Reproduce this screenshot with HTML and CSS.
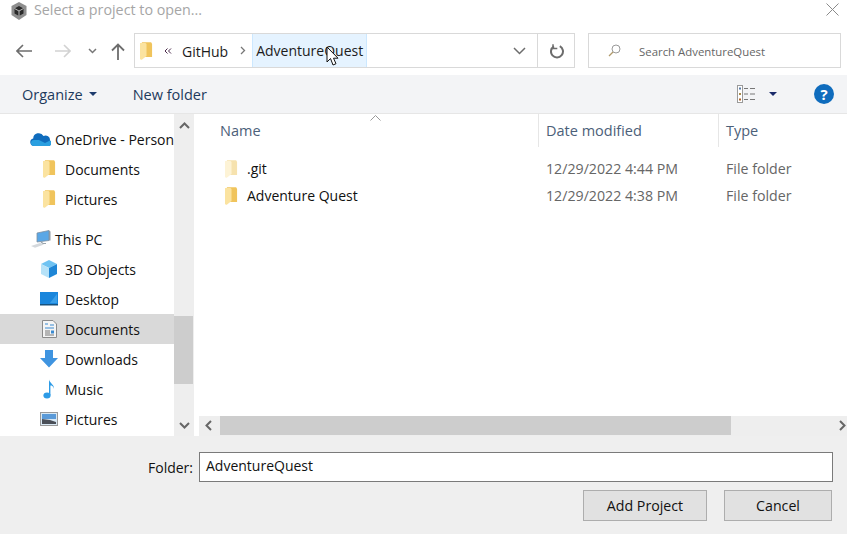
FILE: index.html
```html
<!DOCTYPE html>
<html lang="en">
<head>
	<meta charset="UTF-8">
	<title>Select a project to open...</title>
	<link rel="stylesheet" href="styles.css">
</head>
<body>
	<svg class="defs" width="0" height="0">
		<symbol id="folder" viewBox="0 0 14 19">
			<path d="M2 0h10l1 2v14H2z" fill="#f0c45c"/>
			<path d="M0 1h6l1 1v13L2 19H1L0 18z" fill="#fbe3a0"/>
		</symbol>
		<symbol id="folder-pale" viewBox="0 0 14 19">
			<path d="M2 0h10l1 2v14H2z" fill="#f6e2ae"/>
			<path d="M0 1h6l1 1v13L2 19H1L0 18z" fill="#fdf3d6"/>
		</symbol>
	</svg>

	<div class="titlebar">
		<svg class="app-icon" width="16" height="18" viewBox="0 0 16 18">
			<path d="M8 0l7.500 4v9L8 18 .5 13V4z" fill="#8e8e8e"/>
			<path d="M8 4l4.500 2.500v5L8 14l-4.500-2.500v-5z" fill="#2a2a2a"/>
			<path d="M8 9v5M8 9L3.500 6.500M8 9l4.500-2.500" stroke="#bbb" fill="none"/>
		</svg>
		<span class="title">Select a project to open...</span>
		<svg class="close" width="13" height="13" viewBox="0 0 13 13">
			<path d="M.5.5l12 12M12.500.5l-12 12" stroke="#8a8a8a" fill="none"/>
		</svg>
	</div>

	<div class="navbar">
		<svg class="nav-back" width="16" height="14" viewBox="0 0 16 14">
			<path d="M1 7h15M7 1L1 7l6 6" stroke="#6d6d6d" stroke-width="1.600" fill="none"/>
		</svg>
		<svg class="nav-forward" width="16" height="14" viewBox="0 0 16 14">
			<path d="M0 7h15M9 1l6 6-6 6" stroke="#d2d2d2" stroke-width="1.600" fill="none"/>
		</svg>
		<svg class="nav-down" width="9" height="6" viewBox="0 0 9 6">
			<path d="M1 1l3.500 3.500L8 1" stroke="#777" stroke-width="1.500" fill="none"/>
		</svg>
		<svg class="nav-up" width="14" height="17" viewBox="0 0 14 17">
			<path d="M7 17V1.500M1 7.500l6-6 6 6" stroke="#6d6d6d" stroke-width="1.800" fill="none"/>
		</svg>
		<div class="address">
			<svg class="address-folder" width="13" height="18"><use href="#folder"/></svg>
			<svg class="chevrons" width="8" height="6" viewBox="0 0 8 6">
				<path d="M3.500.5L1 3l2.500 2.500M7 .5L4.500 3 7 5.500" stroke="#4a2a4a" fill="none"/>
			</svg>
			<span class="crumb crumb-first">GitHub</span>
			<svg class="crumb-sep" width="6" height="9" viewBox="0 0 6 9">
				<path d="M1 1l3.500 3.500L1 8" stroke="#777" stroke-width="1.300" fill="none"/>
			</svg>
			<span class="crumb crumb-current">AdventureQuest</span>
			<svg class="address-arrow" width="13" height="8" viewBox="0 0 13 8">
				<path d="M1 1l5.500 5.500L12 1" stroke="#6d6d6d" stroke-width="1.500" fill="none"/>
			</svg>
			<div class="refresh">
				<svg width="15" height="15" viewBox="0 0 15 15">
					<path d="M9.800 2.200A6 6 0 1 1 4 2.300" stroke="#6d6d6d" stroke-width="2" fill="none"/>
					<path d="M3 .2v4.300h4.300" stroke="#6d6d6d" stroke-width="1.500" fill="none"/>
				</svg>
			</div>
		</div>
		<div class="search">
			<svg width="13" height="13" viewBox="0 0 13 13">
				<circle cx="8" cy="5" r="4" stroke="#9a9a9a" fill="none"/>
				<path d="M5 8l-4 4" stroke="#b09a6a" stroke-width="1.200"/>
			</svg>
			<span>Search AdventureQuest</span>
		</div>
	</div>

	<div class="toolbar">
		<span class="tool organize">Organize</span>
		<span class="caret"></span>
		<span class="tool new-folder">New folder</span>
		<svg class="view-icon" width="18" height="18" viewBox="0 0 18 18">
			<rect x=".5" y=".5" width="5" height="17" fill="#fff" stroke="#9a9a9a"/>
			<rect x="2" y="2.500" width="2" height="2" fill="#5a7ca8"/>
			<rect x="2" y="8" width="2" height="2" fill="#a88a4a"/>
			<rect x="2" y="13.500" width="2" height="2" fill="#b0642a"/>
			<path d="M7 3.500h4M13 3.500h5M7 9h4M13 9h5M7 14.500h4M13 14.500h5" stroke="#777"/>
		</svg>
		<span class="caret caret-dark"></span>
		<div class="help">?</div>
	</div>

	<div class="main">
		<div class="tree">
			<ul class="tree-list">
				<li class="tree-top">
					<svg width="21" height="14" viewBox="0 0 21 14">
						<path d="M4 14a3.800 3.800 0 0 1-.8-7.500A5.500 5.500 0 0 1 13.500 4 4.500 4.500 0 0 1 20 8.500 3 3 0 0 1 18 14z" fill="#0f6cbd"/>
						<path d="M4 14a3 3 0 0 1 0-6h5l6 3 5-2.500A3 3 0 0 1 18 14z" fill="#2a9fe0"/>
					</svg>
					<span>OneDrive - Personal</span>
				</li>
				<li><svg class="ico-folder" width="13" height="18"><use href="#folder"/></svg><span>Documents</span></li>
				<li class="tree-last"><svg class="ico-folder" width="13" height="18"><use href="#folder"/></svg><span>Pictures</span></li>
				<li class="tree-top">
					<svg width="21" height="18" viewBox="0 0 21 18">
						<path d="M7 3l12-2.500v10L7 12z" fill="#5aa7e6" stroke="#7f8f9f" stroke-width=".8"/>
						<path d="M19 .5l1.500 1v9l-1.500 0z" fill="#8d99a5"/>
						<path d="M1 16l9-3 4 1.500-9 3.300z" fill="#d4d8dc"/>
						<path d="M11 12l2 1.500h3" stroke="#9aa5ad" stroke-width="1.200" fill="none"/>
					</svg>
					<span>This PC</span>
				</li>
				<li>
					<svg width="18" height="18" viewBox="0 0 18 18">
						<path d="M9 0l8 4-8 4-8-4z" fill="#6fc3f2"/>
						<path d="M1 4l8 4v10l-8-4z" fill="#b6e2f8"/>
						<path d="M17 4L9 8v10l8-4z" fill="#1e86d6"/>
					</svg>
					<span>3D Objects</span>
				</li>
				<li>
					<svg width="18" height="14" viewBox="0 0 18 14">
						<rect width="18" height="12" fill="#1a86dc"/>
						<path d="M10 11l7-9v9z" fill="#3aa0ea"/>
						<rect y="12" width="18" height="1.500" fill="#17527e"/>
					</svg>
					<span>Desktop</span>
				</li>
				<li class="selected">
					<svg width="18" height="18" viewBox="0 0 18 18">
						<path d="M2.500.5H13L16.500 4v13.500h-14z" fill="#f4f4f4" stroke="#8a8a8a"/>
						<path d="M5 4h3M10 5h4M5 8h9" stroke="#3a8ad0"/>
						<path d="M5 11h5M5 13h5M5 15h9" stroke="#777"/>
						<rect x="11" y="10.500" width="3" height="3" fill="#3a8ad0"/>
					</svg>
					<span>Documents</span>
				</li>
				<li>
					<svg width="18" height="18" viewBox="0 0 18 18">
						<path d="M5 0h8v8h5l-9 9.500L0 8h5z" fill="#3f94e0"/>
					</svg>
					<span>Downloads</span>
				</li>
				<li>
					<svg width="18" height="20" viewBox="0 0 18 20">
						<ellipse cx="7" cy="16.500" rx="3.600" ry="3" fill="#2d9be6"/>
						<path d="M9 16V.5c.5 3.500 5.500 5 5 9.500-.5-3-2.500-3.500-3.600-3.500V16z" fill="#2d9be6"/>
					</svg>
					<span>Music</span>
				</li>
				<li>
					<svg width="18" height="14" viewBox="0 0 18 14">
						<rect x=".5" y=".5" width="17" height="13" fill="#d8e8f4" stroke="#999"/>
						<rect x="2" y="2" width="14" height="5" fill="#5a9ad8"/>
						<path d="M2 7l8 1 6 2v2H2z" fill="#4a4f58"/>
					</svg>
					<span>Pictures</span>
				</li>
			</ul>
			<div class="vscroll">
				<svg class="arrow" width="11" height="7" viewBox="0 0 11 7"><path d="M1 6l4.500-4.500L10 6" stroke="#666" stroke-width="2" fill="none"/></svg>
				<div class="vtrack"><div class="vthumb"></div></div>
				<svg class="arrow" width="11" height="7" viewBox="0 0 11 7"><path d="M1 1l4.500 4.500L10 1" stroke="#666" stroke-width="2" fill="none"/></svg>
			</div>
		</div>
		<div class="files">
			<div class="file-head">
				<span class="col col-name">Name</span>
				<span class="col col-date">Date modified</span>
				<span class="col col-type">Type</span>
				<svg class="sort-caret" width="11" height="6" viewBox="0 0 11 6"><path d="M.5 5.500l5-5 5 5" stroke="#999" fill="none"/></svg>
			</div>
			<div class="file-row">
				<span class="col-name file-name"><svg width="13" height="18"><use href="#folder-pale"/></svg>.git</span>
				<span class="col-date file-meta">12/29/2022 4:44 PM</span>
				<span class="col-type file-meta">File folder</span>
			</div>
			<div class="file-row">
				<span class="col-name file-name"><svg width="13" height="18"><use href="#folder"/></svg>Adventure Quest</span>
				<span class="col-date file-meta">12/29/2022 4:38 PM</span>
				<span class="col-type file-meta">File folder</span>
			</div>
			<div class="hscroll">
				<svg width="7" height="11" viewBox="0 0 7 11"><path d="M6 1L1.500 5.500 6 10" stroke="#666" stroke-width="2" fill="none"/></svg>
				<div class="hthumb"></div>
				<svg class="hscroll-right" width="7" height="11" viewBox="0 0 7 11"><path d="M1 1l4.500 4.500L1 10" stroke="#666" stroke-width="2" fill="none"/></svg>
			</div>
		</div>
	</div>

	<div class="footer">
		<div class="folder-row">
			<label class="folder-label">Folder:</label>
			<div class="folder-input">AdventureQuest</div>
		</div>
		<div class="buttons">
			<div class="btn btn-add">Add Project</div>
			<div class="btn btn-cancel">Cancel</div>
		</div>
	</div>

	<!-- mouse pointer over the breadcrumb -->
	<svg class="pointer" width="13" height="21" viewBox="0 0 13 21">
		<path d="M1 1v15l3.500-3.500L7 19l3-1.300-2.500-5.500H12z" fill="#fff" stroke="#111"/>
	</svg>
</body>
</html>
```

FILE: styles.css
```css
* {box-sizing: border-box;}
html, body {margin: 0; padding: 0;}
body {width: 847px; height: 534px; overflow: hidden; position: relative; background: #fff; font-family: "Open Sans", "Noto Sans", sans-serif; font-size: 14px; color: #111;}
svg {display: block; flex: none;}
.defs {position: absolute;}

.titlebar {height: 33px; display: flex; align-items: flex-start; padding: 2px 8px 0 11px;}
.title {margin-left: 7px; color: #a6a6a6; line-height: 16px; font-size: 14.3px;}
.close {margin-left: auto; margin-top: 1px;}

.navbar {height: 42px; display: flex; align-items: flex-start;}
.nav-back {margin: 11px 0 0 16px;}
.nav-forward {margin: 11px 0 0 23px;}
.nav-down {margin: 15px 0 0 17px;}
.nav-up {margin: 10px 0 0 14px;}
.address {width: 441px; height: 35px; margin-left: 9px; border: 1px solid #d9d9d9; display: flex; align-items: center;}
.address-folder {margin-left: 5px;}
.chevrons {margin-left: 11px;}
.crumb {color: #1c1c1c; padding-top: 1px;}
.crumb-first {margin-left: 10px;}
.crumb-sep {margin-left: 12px;}
.crumb-current {height: 33px; line-height: 31px; margin-left: 6px; padding: 1px 3px 0; background: #e5f3ff; border: 1px solid #cce8ff; border-width: 0 1px;}
.address-arrow {margin-left: auto; margin-right: 11px;}
.refresh {width: 37px; height: 33px; border-left: 1px solid #d9d9d9; display: flex; align-items: center; justify-content: center; padding: 2px 0 0 3px;}
.search {width: 253px; height: 35px; margin-left: 13px; border: 1px solid #d9d9d9; display: flex; align-items: center; padding-left: 19px; font-size: 11.4px; color: #666;}
.search span {margin-left: 18px; padding-top: 1px;}

.toolbar {height: 39px; background: #f3f4f6; border-bottom: 1px solid #e6e6e6; display: flex; align-items: center; color: #1d3a5c;}
.tool {font-size: 14.5px;}
.organize {margin-left: 22px;}
.new-folder {margin-left: 36px;}
.caret {width: 0; height: 0; border: 4px solid transparent; border-top: 4px solid #1d3a6c; border-bottom: 0; margin-left: 6px;}
.view-icon {margin-left: auto;}
.caret-dark {margin-left: 14px; border-top-color: #1a2a6a;}
.help {width: 20px; height: 20px; margin: 0 13px 0 37px; border-radius: 50%; background: #0f6cbd; color: #fff; font-weight: 700; font-size: 15px; line-height: 20px; text-align: center;}

.main {height: 322px; display: flex;}
.tree {width: 194px; display: flex;}
.tree-list {width: 174px; margin: 0; padding: 10px 0 0; list-style: none; overflow: hidden; white-space: nowrap;}
.tree-list li {height: 30px; display: flex; align-items: center; padding-left: 40px;}
.tree-list li svg {width: 18px; margin-right: 7px;}
.tree-list li .ico-folder {width: 13px; margin-left: 3px; margin-right: 9px;}
.tree-list .tree-top {padding-left: 30px;}
.tree-list .tree-top svg {width: 21px; margin-right: 4px;}
.tree-last {margin-bottom: 10px;}
.tree-list .selected {background: #d9d9d9;}
.vscroll {width: 20px; background: #eee; display: flex; flex-direction: column; align-items: center; padding: 8px 0 7px;}
.vtrack {flex: 1; width: 100%; padding-top: 187px;}
.vthumb {width: 19px; height: 68px; background: #cdcdcd;}

.files {flex: 1; margin-left: 5px; display: flex; flex-direction: column;}
.file-head {height: 33px; display: flex; align-items: center; position: relative; color: #4c6079; font-size: 14.5px;}
.col-name {width: 339px; padding-left: 21px;}
.col-date {width: 180px; padding-left: 7px;}
.col-type {padding-left: 7px;}
.file-head .col-date, .file-head .col-type {height: 100%; line-height: 33px; border-left: 1px solid #e6e6e6;}
.sort-caret {position: absolute; left: 171px; top: 1px;}
.file-row {height: 27px; display: flex; align-items: center; color: #666; flex: none; font-size: 14.2px;}
.file-row:nth-child(2) {margin-top: 8px;}
.file-row .col-type {padding-left: 8px;}
.file-row .col-date {padding-left: 8px;}
.file-name {display: flex; align-items: center; color: #111; font-size: 14px;}
.file-name svg {margin: 0 9px 0 5px;}
.hscroll {margin-top: auto; height: 20px; background: #eee; display: flex; align-items: center; padding-left: 6px; padding-bottom: 1px;}
.hthumb {width: 511px; height: 19px; background: #cdcdcd; margin-left: 8px;}
.hscroll-right {margin-left: auto; margin-right: 1px;}

.footer {height: 98px; background: #efefef; padding: 16px 14px 0 0;}
.folder-row {display: flex; align-items: center; justify-content: flex-end;}
.folder-label {margin-right: 6px;}
.folder-input {width: 634px; height: 30px; background: #fff; border: 1px solid #7a7a7a; line-height: 26px; padding-left: 6px;}
.buttons {display: flex; justify-content: flex-end; margin-top: 8px; margin-right: 1px;}
.btn {height: 31px; border: 1px solid #adadad; background: #e1e1e1; text-align: center; line-height: 30px; font-size: 14.2px;}
.btn-add {width: 124px;}
.btn-cancel {width: 108px; margin-left: 17px;}

.pointer {position: absolute; left: 326px; top: 46px;}
```
